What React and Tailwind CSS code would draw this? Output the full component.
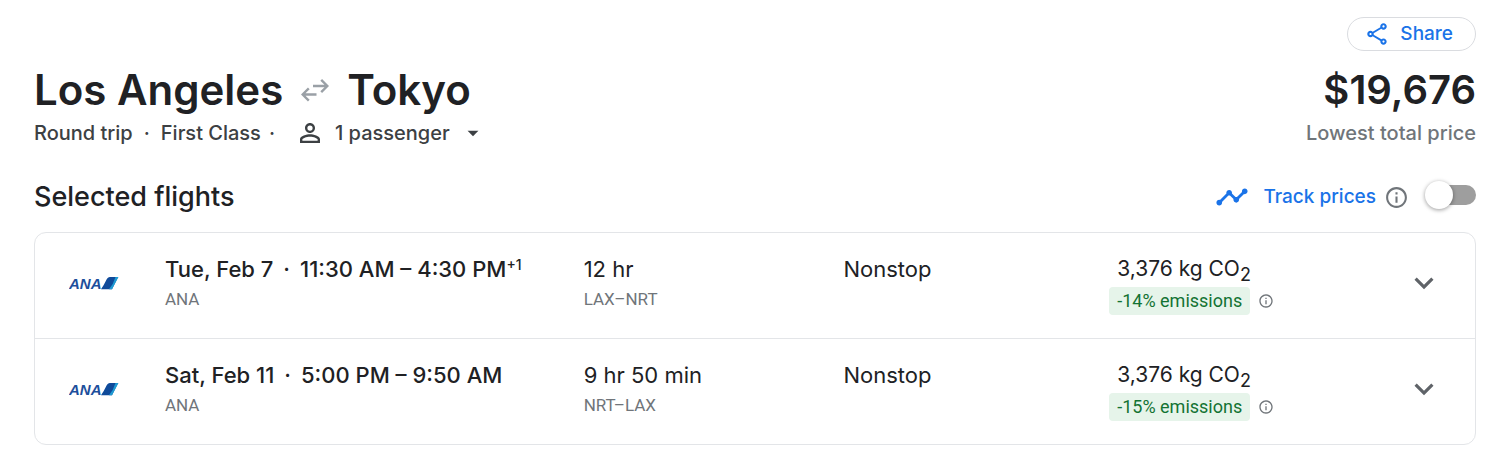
import React, { useState } from "react";
import {
  MdOutlineShare,
  MdPersonOutline,
  MdArrowDropDown,
  MdTimeline,
  MdOutlineInfo,
  MdExpandMore,
} from "react-icons/md";

const flights = [
  {
    id: "out",
    date: "Tue, Feb 7",
    time: "11:30 AM – 4:30 PM",
    plus: "+1",
    duration: "12 hr",
    route: "LAX–NRT",
    emissions: "-14% emissions",
  },
  {
    id: "back",
    date: "Sat, Feb 11",
    time: "5:00 PM – 9:50 AM",
    plus: "",
    duration: "9 hr 50 min",
    route: "NRT–LAX",
    emissions: "-15% emissions",
  },
];

function SwapArrows() {
  return (
    <svg
      viewBox="0 0 28 24"
      className="h-6 w-7 text-[#9aa0a6]"
      fill="none"
      stroke="currentColor"
      strokeWidth="2.4"
      aria-hidden="true"
    >
      <path d="M12 8h14M20.200 1.800l6.200 6.200-6.200 6.200" />
      <path d="M15.500 16.500H2M7.800 10.300l-6.200 6.200 6.200 6.200" />
    </svg>
  );
}

function AnaLogo() {
  return (
    <svg viewBox="0 0 50 16" className="h-4 w-[50px]" role="img" aria-label="ANA logo">
      <text
        x="0"
        y="14"
        fill="#1d4f9c"
        fontFamily="Liberation Sans, sans-serif"
        fontSize="15"
        fontWeight="700"
        fontStyle="italic"
      >
        ANA
      </text>
      <path d="M32 14.200Q35 10 36.800 6Q38.500 2 41 2H49L43 14.200Z" fill="#0f4a9a" />
      <path d="M46.500 2H49.500L43 14.200H40Q44.500 9 46.500 2Z" fill="#1f9bd3" />
    </svg>
  );
}

function FlightRow({ flight }) {
  return (
    <li className="grid grid-cols-[130px_419fr_260fr_266fr_264fr_102px] items-start border-t border-[#e3e5e8] pb-[23px] pt-[18px] first:border-t-0">
      <div className="self-center pl-[34px]">
        <AnaLogo />
      </div>
      <div>
        <div className="text-[22px] font-medium leading-9">
          {flight.date}
          <span className="mx-2.5">·</span>
          {flight.time}
          {flight.plus && <sup className="text-sm leading-none">{flight.plus}</sup>}
        </div>
        <div className="font-[Roboto] text-[17px] leading-6 text-[#70757a]">ANA</div>
      </div>
      <div>
        <div className="text-[22px] leading-9">{flight.duration}</div>
        <div className="font-[Roboto] text-[17px] leading-6 text-[#70757a]">{flight.route}</div>
      </div>
      <div className="text-[22px] leading-9">Nonstop</div>
      <div>
        <div className="h-9 pl-2 text-[21px] leading-9">
          3,376 kg CO<sub className="text-[18px] leading-none">2</sub>
        </div>
        <div className="flex items-center gap-2">
          <span className="rounded bg-[#e6f4ea] px-2 font-[Roboto] text-[18px] leading-7 text-[#137333]">
            {flight.emissions}
          </span>
          <button type="button" aria-label="About emissions" className="text-[#70757a]">
            <MdOutlineInfo size={16} />
          </button>
        </div>
      </div>
      <button
        type="button"
        aria-label="Flight details"
        className="self-center justify-self-center text-[#5f6368]"
      >
        <MdExpandMore size={38} />
      </button>
    </li>
  );
}

export default function App() {
  const [tracking, setTracking] = useState(false);
  return (
    <main className="bg-white pb-5 pl-[34px] pr-6 pt-[17px] font-[Inter,sans-serif] text-[#202124]">
      <div className="flex justify-end">
        <button
          type="button"
          className="flex h-[34px] items-center gap-2.5 rounded-full border border-[#dadce0] pl-4 pr-[22px] text-[19px] font-medium text-[#1a73e8]"
        >
          <MdOutlineShare size={26} />
          Share
        </button>
      </div>

      <header className="mt-3 flex items-start justify-between">
        <div>
          <h1 className="flex items-center gap-[18px] text-[42px] font-semibold leading-[54px]">
            Los Angeles
            <SwapArrows />
            Tokyo
          </h1>
          <div className="flex items-center text-xl font-medium leading-8 text-[#3c4043]">
            <span>Round trip</span>
            <span className="mx-[11px]">·</span>
            <span>First Class</span>
            <span className="mx-2">·</span>
            <button type="button" className="ml-3 flex items-center">
              <MdPersonOutline size={30} className="mr-2.5" />
              1 passenger
              <MdArrowDropDown size={26} className="ml-2.5" />
            </button>
          </div>
        </div>
        <div className="text-right">
          <div className="text-[40px] font-semibold leading-[54px]">$19,676</div>
          <div className="text-xl font-medium leading-8 text-[#70757a]">Lowest total price</div>
        </div>
      </header>

      <section>
        <div className="mt-[30px] flex h-9 items-center justify-between">
          <h2 className="text-[27px] font-medium leading-9">Selected flights</h2>
          <div className="flex items-center text-[19px] font-medium text-[#1a73e8]">
            <MdTimeline size={34} className="mr-3.5" />
            <label htmlFor="track">Track prices</label>
            <button type="button" aria-label="About price tracking" className="ml-2 text-[#70757a]">
              <MdOutlineInfo size={25} />
            </button>
            <span className="mb-1 ml-4 grid h-7 w-[51px] items-center">
              <input
                id="track"
                type="checkbox"
                role="switch"
                checked={tracking}
                onChange={(e) => setTracking(e.target.checked)}
                className="peer col-start-1 row-start-1 ml-2 h-5 w-[43px] appearance-none rounded-full bg-[#9e9e9e] checked:bg-[#8ab4f8]"
              />
              <span className="pointer-events-none col-start-1 row-start-1 size-7 rounded-full bg-white shadow-[0_1px_4px_rgba(0,0,0,0.4)] peer-checked:justify-self-end" />
            </span>
          </div>
        </div>
        <ul className="mt-[17px] rounded-xl border border-[#e3e5e8]">
          {flights.map((flight) => (
            <FlightRow key={flight.id} flight={flight} />
          ))}
        </ul>
      </section>
    </main>
  );
}
